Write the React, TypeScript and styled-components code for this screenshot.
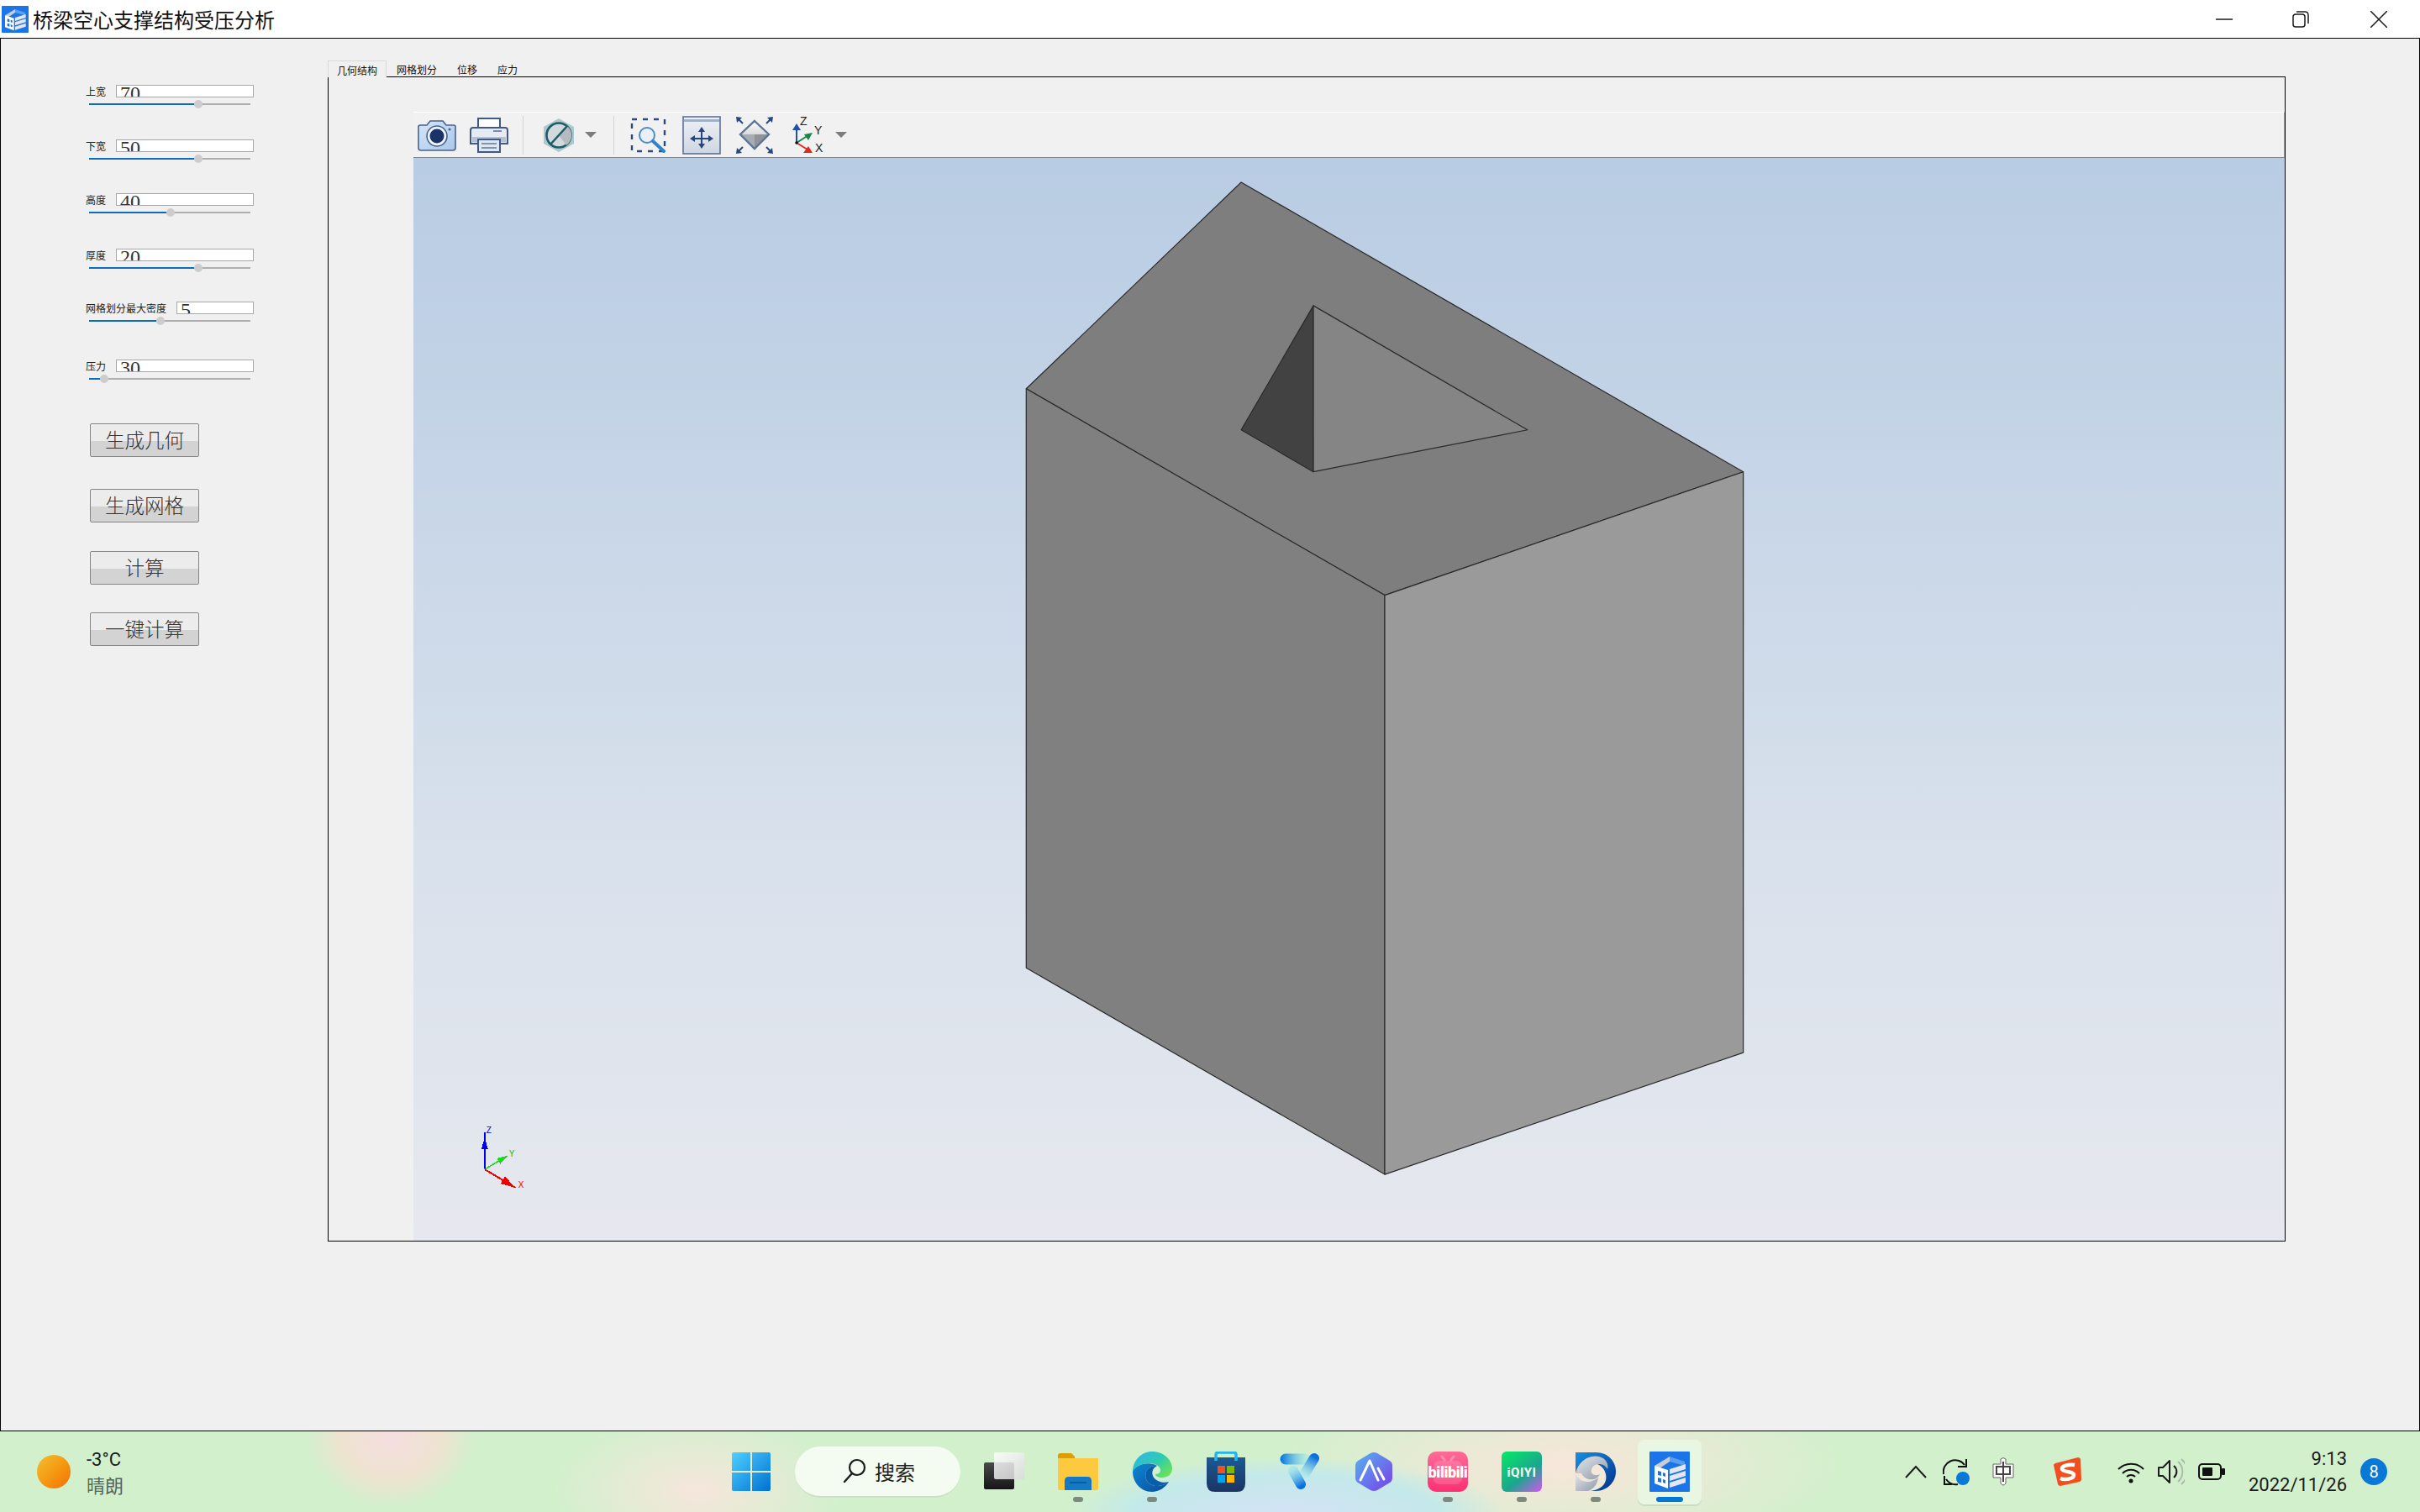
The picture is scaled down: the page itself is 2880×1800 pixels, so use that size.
import styled, { createGlobalStyle } from "styled-components";

const GlobalStyle = createGlobalStyle`
  html, body {
    margin: 0;
    padding: 0;
    width: 2880px;
    height: 1800px;
    overflow: hidden;
    background: #f0f0f0;
    font-family: "Noto Sans CJK SC", "Liberation Sans", sans-serif;
  }
  * { box-sizing: border-box; }
`;

const Page = styled.div`
  width: 2880px;
  height: 1800px;
  display: flex;
  flex-direction: column;
`;

const TitleBar = styled.header`
  height: 45px;
  background: #fff;
  display: flex;
  align-items: center;
  padding-left: 2px;
`;

const Title = styled.h1`
  margin: 0 0 0 5px;
  font-size: 24px;
  font-weight: 400;
  line-height: 45px;
  color: #111;
`;

const WindowControls = styled.div`
  margin-left: auto;
  display: flex;
`;

const WindowButton = styled.span<{ $mr: number }>`
  display: block;
  width: 20px;
  height: 20px;
  margin-right: ${({ $mr }) => $mr}px;
  svg { display: block; }
`;

const Main = styled.main`
  height: 1659px;
  border: 1px solid #000;
  background: #f0f0f0;
  display: flex;
`;

const SidePanel = styled.aside`
  width: 389px;
  padding-top: 55px;
  display: flex;
  flex-direction: column;
`;

const ParamRow = styled.div<{ $top: number }>`
  margin-top: ${({ $top }) => $top}px;
  margin-left: 101px;
  width: 200px;
`;

const ParamHead = styled.div`
  display: flex;
  align-items: center;
  height: 15px;
`;

const ParamLabel = styled.label`
  font-size: 12px;
  line-height: 15px;
  color: #222;
  margin-right: 12px;
  white-space: nowrap;
`;

/* the value text is taller than its box in the reference, so it is clipped */
const ValueBox = styled.div`
  flex: 1;
  height: 15px;
  background: #fff;
  border: 1px solid #a8a8a8;
  overflow: hidden;
  font-family: "Liberation Serif", serif;
  font-size: 24px;
  line-height: 18px;
  color: #333;
  padding-left: 4px;
`;

const SliderBox = styled.div`
  position: relative;
  width: 192px;
  height: 16px;
  margin-left: 4px;
  display: flex;
  align-items: center;
`;

const SliderTrack = styled.div`
  width: 100%;
  height: 2px;
  background: #aeaeae;
`;

const SliderFill = styled.div`
  height: 2px;
  background: #0f6cbd;
`;

const SliderKnob = styled.span`
  position: absolute;
  top: 3px;
  width: 10px;
  height: 10px;
  margin-left: -5px;
  border-radius: 50%;
  background: #cdcdcd;
`;

const ActionButton = styled.button<{ $top: number }>`
  display: block;
  width: 130px;
  height: 40px;
  margin: ${({ $top }) => $top}px 0 0 106px;
  padding: 1px 0 0;
  border: 1px solid #868686;
  border-radius: 2px;
  background: linear-gradient(#ececec 0, #ececec 52%, #d3d3d3 52%, #d3d3d3 100%);
  font-family: "Liberation Serif", "Noto Sans CJK SC", serif;
  font-size: 23.5px;
  font-weight: 300;
  line-height: 36px;
  color: #333;
`;

const TabWidget = styled.section`
  width: 2330px;
  padding-top: 26px;
  display: flex;
  flex-direction: column;
`;

const TabBar = styled.nav`
  display: flex;
  height: 20px;
  position: relative;
  z-index: 1;
`;

const Tab = styled.span<{ $active?: boolean }>`
  padding: 0 12px;
  height: 20px;
  font-size: 12px;
  line-height: 22px;
  color: #111;
  ${({ $active }) =>
    $active ? "background: #f0f0f0; border: 1px solid #d9d9d9; border-bottom: 0; padding: 0 10px;" : ""}
`;

const TabPane = styled.div`
  margin-top: -1px;
  height: 1387px;
  border: 1px solid #000;
  padding: 41px 0 0 101px;
  display: flex;
  flex-direction: column;
`;

const Toolbar = styled.div`
  height: 55px;
  border-top: 1px solid #fff;
  border-bottom: 1px solid #888;
  border-right: 1px solid #aaa;
  background: #f1f1f1;
  display: flex;
  align-items: center;
  padding-left: 5px;
`;

const ToolIcon = styled.span<{ $ml: number; $w?: number }>`
  display: block;
  margin-left: ${({ $ml }) => $ml}px;
  width: ${({ $w }) => $w ?? 46}px;
  svg { display: block; }
`;

const ToolSeparator = styled.span<{ $ml: number }>`
  width: 1px;
  height: 46px;
  margin-left: ${({ $ml }) => $ml}px;
  background: #d2d2d2;
`;

const ToolCaret = styled.span<{ $ml: number }>`
  margin-left: ${({ $ml }) => $ml}px;
  width: 0;
  height: 0;
  border-left: 7px solid transparent;
  border-right: 7px solid transparent;
  border-top: 7px solid #7d7d7d;
`;

const Viewport = styled.div`
  flex: 1;
  background: linear-gradient(#b8cce3 0%, #c9d7e8 35%, #d9e1ec 65%, #e6e8ee 100%);
  svg { display: block; }
`;

const Taskbar = styled.footer`
  height: 96px;
  display: flex;
  align-items: center;
  background:
    radial-gradient(ellipse 100px 85px at 465px 5px, #f5dde0 0%, #eee3d0 60%, rgba(225, 238, 200, 0) 100%),
    radial-gradient(ellipse 170px 90px at 830px 70px, #f6e6dc 0%, rgba(246, 230, 220, 0) 100%),
    radial-gradient(ellipse 260px 70px at 1530px 100px, #d4e2f6 0%, #c4e9ea 70%, rgba(196, 233, 234, 0) 100%),
    radial-gradient(ellipse 330px 110px at 1860px 40px, #f8e6da 0%, rgba(248, 230, 218, 0) 100%),
    #d3f0cd;
`;

const Weather = styled.div`
  width: 871px;
  padding-left: 44px;
  display: flex;
  align-items: center;
`;

const Sun = styled.span`
  width: 40px;
  height: 40px;
  border-radius: 50%;
  background: linear-gradient(135deg, #f3c030 0%, #f5960f 55%, #f06f08 100%);
`;

const WeatherText = styled.div`
  margin: 3px 0 0 19px;
  font-family: Roboto, "Noto Sans CJK SC", sans-serif;
  font-size: 22px;
  line-height: 32px;
  color: #1b1b1b;
`;

const WeatherSub = styled.div`
  color: #56655a;
`;

const StartIcon = styled.span`
  width: 46px;
  height: 46px;
  svg { display: block; }
`;

const SearchBox = styled.div`
  width: 197px;
  height: 61px;
  margin-left: 29px;
  border-radius: 31px;
  background: #f4fbf0;
  border-bottom: 2px solid #c9e2c3;
  display: flex;
  align-items: center;
  padding-left: 57px;
  font-size: 24px;
  color: #1f1f1f;
  svg { margin-right: 10px; }
`;

const TaskSlots = styled.div`
  margin-left: 8px;
  display: flex;
`;

const TaskSlot = styled.div<{ $active?: boolean }>`
  position: relative;
  width: 88px;
  height: 77px;
  display: flex;
  align-items: center;
  justify-content: center;
  svg { display: block; }
  ${({ $active }) =>
    $active
      ? "background: #e8f6e2; border-radius: 8px; width: 76px; margin-left: 6px; box-shadow: 0 2px 0 #c6dfc0;"
      : ""}
`;

const RunDot = styled.span<{ $active?: boolean }>`
  position: absolute;
  bottom: 3px;
  left: 50%;
  width: ${({ $active }) => ($active ? 32 : 12)}px;
  height: 6px;
  margin-left: ${({ $active }) => ($active ? -16 : -6)}px;
  border-radius: 3px;
  background: ${({ $active }) => ($active ? "#0078d4" : "#7d8a80")};
`;

const Tray = styled.div`
  margin-left: 242px;
  display: flex;
  align-items: center;
`;

const TrayIcon = styled.span<{ $ml: number; $w: number }>`
  display: block;
  margin-left: ${({ $ml }) => $ml}px;
  width: ${({ $w }) => $w}px;
  svg { display: block; }
`;

const Clock = styled.div`
  width: 145px;
  text-align: right;
  font-family: Roboto, "Liberation Sans", sans-serif;
  font-size: 22px;
  line-height: 31px;
  color: #1b1b1b;
`;

const Badge = styled.span`
  margin-left: 16px;
  width: 32px;
  height: 32px;
  border-radius: 50%;
  background: #0a78d7;
  color: #fff;
  font-family: Roboto, sans-serif;
  font-size: 20px;
  line-height: 32px;
  text-align: center;
`;

const AppIcon = ({ size }: { size: number }) => (
  <svg width={size} height={size} viewBox="0 0 48 48">
    <rect width="48" height="48" rx="1" fill="#1b74e8" />
    <path d="M6 17 L24 6 L24 12 L12 20 Z" fill="#c9ced6" />
    <path d="M24 6 L42 12 L42 17 L24 12 Z" fill="#5aa0f0" />
    <path d="M6 17 L22 22 L22 44 L6 38 Z" fill="#fff" />
    <path d="M10 23 L14 24 L14 29 L10 28 Z M16 25 L19 26 L19 30 L16 29 Z M10 31 L14 32 L14 37 L10 36 Z M16 33 L19 34 L19 38 L16 37 Z" fill="#1b74e8" />
    <path d="M24 21 L43 15 L43 21 L24 27 Z M24 29 L43 23 L43 29 L24 35 Z M24 37 L43 31 L43 37 L24 43 Z" fill="#e4e8ee" />
  </svg>
);

const CameraIcon = () => (
  <svg width="46" height="40" viewBox="0 0 46 40">
    <defs>
      <linearGradient id="camBody" x1="0" y1="0" x2="1" y2="1">
        <stop offset="0" stopColor="#d6e6f7" />
        <stop offset="1" stopColor="#a9c8ea" />
      </linearGradient>
    </defs>
    <path d="M3 8 H11 L15 3 H30 L34 8 H43 Q45 8 45 10 V35 Q45 38 42 38 H4 Q1 38 1 35 V10 Q1 8 3 8 Z" fill="url(#camBody)" stroke="#47628f" strokeWidth="1.6" />
    <circle cx="23" cy="21" r="12" fill="#edf3fa" stroke="#47628f" strokeWidth="1.6" />
    <circle cx="23" cy="21" r="8.5" fill="#1c3366" />
    <circle cx="38" cy="13" r="1.5" fill="#47628f" />
  </svg>
);

const PrinterIcon = () => (
  <svg width="46" height="44" viewBox="0 0 46 44">
    <rect x="10" y="2" width="26" height="14" fill="#fff" stroke="#3f5a88" strokeWidth="2" />
    <path d="M4 13 H42 Q45 13 45 16 V32 H1 V16 Q1 13 4 13 Z" fill="#e6ebf3" stroke="#3f5a88" strokeWidth="2" />
    <rect x="3" y="24" width="40" height="6" fill="#b4c2d6" />
    <rect x="28" y="16" width="10" height="2" fill="#7d8ca6" />
    <rect x="10" y="27" width="26" height="15" fill="#dfe6ef" stroke="#3f5a88" strokeWidth="2" />
    <path d="M14 32 H32 M14 37 H32" stroke="#7f93b3" strokeWidth="2" />
  </svg>
);

const HexIcon = () => (
  <svg width="38" height="42" viewBox="0 0 38 42">
    <path d="M19 1 L37 11 V31 L19 41 L1 31 V11 Z" fill="#afc8cd" />
    <circle cx="19" cy="21" r="14.5" fill="#d3dadd" stroke="#1d5c68" strokeWidth="2.6" />
    <path d="M19 21 L29 10 A14.5 14.5 0 0 1 28 33 Z" fill="#b4bcc1" />
    <path d="M9 32 L29 10" stroke="#1d5c68" strokeWidth="2.6" />
  </svg>
);

const ZoomBoxIcon = () => (
  <svg width="44" height="42" viewBox="0 0 44 42">
    <rect x="2" y="2" width="39" height="38" fill="none" stroke="#2c4a80" strokeWidth="2.4" strokeDasharray="6 7" />
    <circle cx="20" cy="21" r="9" fill="#e9f0f9" stroke="#4a8cc4" strokeWidth="2" />
    <path d="M27 28 L40 40" stroke="#2f83c9" strokeWidth="4" strokeLinecap="round" />
  </svg>
);

const PanIcon = () => (
  <svg width="46" height="46" viewBox="0 0 46 46">
    <defs>
      <linearGradient id="panBg" x1="0" y1="0" x2="0" y2="1">
        <stop offset="0" stopColor="#eef1f6" />
        <stop offset="1" stopColor="#cfd6e2" />
      </linearGradient>
    </defs>
    <rect x="1" y="1" width="44" height="44" fill="url(#panBg)" stroke="#5b7099" strokeWidth="1.6" />
    <rect x="2" y="4" width="42" height="3" fill="#9fb0c8" />
    <path d="M23 17 V37 M12 27 H34" stroke="#27467c" strokeWidth="2" />
    <path d="M23 13 L19 19 H27 Z M23 39 L19 33 H27 Z M9 27 L15 23 V31 Z M37 27 L31 23 V31 Z" fill="#27467c" />
  </svg>
);

const FitIcon = () => (
  <svg width="46" height="46" viewBox="0 0 46 46">
    <defs>
      <linearGradient id="fitTop" x1="0" y1="0" x2="0" y2="1">
        <stop offset="0" stopColor="#fdfdfd" />
        <stop offset="1" stopColor="#d8dade" />
      </linearGradient>
    </defs>
    <path d="M23 6 L40 22 H6 Z" fill="url(#fitTop)" />
    <path d="M6 22 H23 V39 Z" fill="#a8adb4" />
    <path d="M23 22 H40 L23 39 Z" fill="#8e9399" />
    <path d="M23 6 L40 22 L23 39 L6 22 Z" fill="none" stroke="#5d7494" strokeWidth="2.4" />
    <path d="M1 1 L8 2 L2 8 Z M45 1 L38 2 L44 8 Z M1 45 L8 44 L2 38 Z M45 45 L38 44 L44 38 Z" fill="#26497f" />
    <path d="M3 3 L9 9 M43 3 L37 9 M3 43 L9 37 M43 43 L37 37" stroke="#26497f" strokeWidth="2" />
  </svg>
);

const AxesIcon = () => (
  <svg width="46" height="46" viewBox="0 0 46 46">
    <path d="M6 32 V14" stroke="#1f4fb3" strokeWidth="2" />
    <path d="M6 9 L1 17 H11 Z" fill="#1f4fb3" />
    <path d="M6 32 L20 23" stroke="#15884a" strokeWidth="2" />
    <path d="M25 20 L15 22 L20 29 Z" fill="#15884a" />
    <path d="M6 32 L19 40" stroke="#e3261f" strokeWidth="2" />
    <path d="M25 44 L14 44 L20 36 Z" fill="#e3261f" />
    <circle cx="6" cy="32" r="1.8" fill="#111" />
    <text x="10" y="11" fontFamily="Liberation Sans, sans-serif" fontSize="14" fill="#222">Z</text>
    <text x="27" y="22" fontFamily="Liberation Sans, sans-serif" fontSize="14" fill="#222">Y</text>
    <text x="28" y="43" fontFamily="Liberation Sans, sans-serif" fontSize="14" fill="#222">X</text>
  </svg>
);

const WinLogo = () => (
  <svg width="46" height="46" viewBox="0 0 46 46">
    <defs>
      <linearGradient id="winGrad" x1="0" y1="0" x2="1" y2="1">
        <stop offset="0" stopColor="#4fd0ff" />
        <stop offset="1" stopColor="#0070d2" />
      </linearGradient>
    </defs>
    <path d="M0 2 Q0 0 2 0 H22 V22 H0 Z M24 0 H44 Q46 0 46 2 V22 H24 Z M0 24 H22 V46 H2 Q0 46 0 44 Z M24 24 H46 V44 Q46 46 44 46 H24 Z" fill="url(#winGrad)" />
  </svg>
);

const TaskViewIcon = () => (
  <svg width="48" height="46" viewBox="0 0 48 46">
    <defs>
      <linearGradient id="tvDark" x1="0" y1="0" x2="0" y2="1">
        <stop offset="0" stopColor="#4a4a4a" />
        <stop offset="1" stopColor="#151515" />
      </linearGradient>
      <linearGradient id="tvLight" x1="0" y1="0" x2="1" y2="1">
        <stop offset="0" stopColor="#fff" />
        <stop offset="1" stopColor="#dadada" />
      </linearGradient>
    </defs>
    <rect x="0" y="12" width="36" height="32" rx="2" fill="url(#tvDark)" />
    <rect x="12" y="0" width="36" height="32" rx="2" fill="url(#tvLight)" opacity="0.85" />
  </svg>
);

const FolderIcon = () => (
  <svg width="48" height="44" viewBox="0 0 48 44">
    <path d="M0 3 Q0 0 3 0 H16 L20 4 V8 H0 Z" fill="#dc9e00" />
    <path d="M0 6 H47 Q48 6 48 7 V42 Q48 44 46 44 H2 Q0 44 0 42 Z" fill="#fdc93f" />
    <path d="M8 44 V33 Q8 28 13 28 H35 Q40 28 40 33 V44 Z" fill="#1479c5" />
    <path d="M14 35 H34" stroke="#0d5a9c" strokeWidth="2" />
  </svg>
);

const EdgeIcon = () => (
  <svg width="48" height="48" viewBox="0 0 48 48">
    <defs>
      <linearGradient id="edgeTop" x1="0" y1="0" x2="1" y2="0.7">
        <stop offset="0" stopColor="#30b6ee" />
        <stop offset="0.6" stopColor="#2ecbb0" />
        <stop offset="1" stopColor="#6ae05c" />
      </linearGradient>
      <linearGradient id="edgeLow" x1="0" y1="0" x2="1" y2="1">
        <stop offset="0" stopColor="#0d86d4" />
        <stop offset="1" stopColor="#0b4c9c" />
      </linearGradient>
    </defs>
    <path d="M1 24 C1 10 12 0 24 0 C38 0 48 10 48 20 C48 27 43 31 36 31 C31 31 28 29 28 27 C34 27 36 22 32 18 C26 12 8 12 1 24 Z" fill="url(#edgeTop)" />
    <path d="M1 24 C6 14 22 12 30 17 C20 16 14 24 17 33 C20 42 34 44 44 36 C40 43 32 48 24 48 C10 48 1 36 1 24 Z" fill="url(#edgeLow)" />
    <path d="M17 33 C14 24 20 16 30 17 C24 20 23 26 26 31 C30 36 38 38 44 36 C34 44 20 42 17 33 Z" fill="#0a5ea8" />
  </svg>
);

const StoreIcon = () => (
  <svg width="46" height="48" viewBox="0 0 46 48">
    <defs>
      <linearGradient id="storeBag" x1="0" y1="0" x2="0" y2="1">
        <stop offset="0" stopColor="#1b5a94" />
        <stop offset="1" stopColor="#1c3363" />
      </linearGradient>
    </defs>
    <path d="M0 7 H46 V38 Q46 48 36 48 H10 Q0 48 0 38 Z" fill="url(#storeBag)" />
    <path d="M11 11 V4 Q11 1 14 1 H32 Q35 1 35 4 V11" fill="none" stroke="#23b4f2" strokeWidth="3.5" />
    <rect x="13" y="17" width="9" height="9" fill="#f25022" />
    <rect x="24" y="17" width="9" height="9" fill="#7fba00" />
    <rect x="13" y="28" width="9" height="9" fill="#00a4ef" />
    <rect x="24" y="28" width="9" height="9" fill="#ffb900" />
  </svg>
);

const VIcon = () => (
  <svg width="48" height="46" viewBox="0 0 48 46">
    <defs>
      <linearGradient id="vA" gradientUnits="userSpaceOnUse" x1="2" y1="8" x2="32" y2="8">
        <stop offset="0" stopColor="#0a7ae0" />
        <stop offset="1" stopColor="#8ce6ee" stopOpacity="0.4" />
      </linearGradient>
      <linearGradient id="vB" gradientUnits="userSpaceOnUse" x1="42" y1="6" x2="29" y2="28">
        <stop offset="0" stopColor="#0a6fe0" />
        <stop offset="1" stopColor="#9cecf0" stopOpacity="0.4" />
      </linearGradient>
      <linearGradient id="vC" gradientUnits="userSpaceOnUse" x1="15" y1="20" x2="26" y2="40">
        <stop offset="0" stopColor="#7ee2ee" stopOpacity="0.4" />
        <stop offset="1" stopColor="#0a6fe0" />
      </linearGradient>
    </defs>
    <path d="M7 8 H30" stroke="url(#vA)" strokeWidth="13" strokeLinecap="round" fill="none" />
    <path d="M41 7 L30 25" stroke="url(#vB)" strokeWidth="12" strokeLinecap="round" fill="none" />
    <path d="M16 22 L25 38" stroke="url(#vC)" strokeWidth="12" strokeLinecap="round" fill="none" />
  </svg>
);

const ArcIcon = () => (
  <svg width="44" height="48" viewBox="0 0 44 48">
    <defs>
      <linearGradient id="arcBg" x1="0" y1="0" x2="1" y2="1">
        <stop offset="0" stopColor="#55b4f0" />
        <stop offset="1" stopColor="#7a3ee8" />
      </linearGradient>
    </defs>
    <path d="M18 2 Q22 0 26 2 L41 11 Q44 13 44 17 V31 Q44 35 41 37 L26 46 Q22 48 18 46 L3 37 Q0 35 0 31 V17 Q0 13 3 11 Z" fill="url(#arcBg)" />
    <path d="M6 34 L17 11 L27 34 M27 20 L34 33" fill="none" stroke="#fff" strokeWidth="3" strokeLinecap="round" strokeLinejoin="round" />
  </svg>
);

const BiliIcon = () => (
  <svg width="48" height="48" viewBox="0 0 48 48">
    <defs>
      <linearGradient id="biliBg" x1="0" y1="0" x2="0" y2="1">
        <stop offset="0" stopColor="#fc6c97" />
        <stop offset="1" stopColor="#fd2f73" />
      </linearGradient>
    </defs>
    <rect width="48" height="48" rx="10" fill="url(#biliBg)" />
    <rect x="7" y="11" width="34" height="28" rx="7" fill="#fff" opacity="0.15" />
    <path d="M16 5 L21 11 M32 5 L27 11" stroke="#fff" strokeOpacity="0.25" strokeWidth="3" />
    <text x="24" y="31" textAnchor="middle" fontFamily="Roboto, sans-serif" fontWeight="900" fontSize="18" letterSpacing="-0.4" fill="#fff">bilibili</text>
  </svg>
);

const IqiyiIcon = () => (
  <svg width="48" height="48" viewBox="0 0 48 48">
    <defs>
      <linearGradient id="iqBg" x1="0.2" y1="0" x2="1" y2="1">
        <stop offset="0" stopColor="#07e06b" />
        <stop offset="0.55" stopColor="#1ca58e" />
        <stop offset="1" stopColor="#d655f5" />
      </linearGradient>
    </defs>
    <rect width="48" height="48" rx="6" fill="url(#iqBg)" />
    <text x="24" y="30" textAnchor="middle" fontFamily="Roboto, sans-serif" fontWeight="700" fontSize="15" letterSpacing="0.6" fill="#fff">iQIYI</text>
  </svg>
);

const SwirlIcon = () => (
  <svg width="48" height="48" viewBox="0 0 48 48">
    <defs>
      <linearGradient id="swA" x1="0" y1="0" x2="1" y2="1">
        <stop offset="0" stopColor="#e4e7ec" />
        <stop offset="1" stopColor="#8f97a8" />
      </linearGradient>
      <linearGradient id="swB" x1="0" y1="0" x2="1" y2="1">
        <stop offset="0" stopColor="#1b8fe0" />
        <stop offset="1" stopColor="#002f8c" />
      </linearGradient>
    </defs>
    <path d="M0 1 H24 C40 1 48 13 48 24 C48 36 38 47 24 47 H18 C33 45 38 36 36 27 C34 17 24 12 14 14 C8 16 3 20 0 26 Z" fill="url(#swB)" />
    <path d="M0 26 C3 12 16 3 28 6 C36 8 40 15 38 21 C34 13 22 13 19 21 C17 27 24 30 29 27 C24 37 10 34 7 26 Z" fill="url(#swA)" />
    <path d="M0 26 C4 36 16 40 27 31 C26 40 20 46 14 47 H0 Z" fill="url(#swA)" />
  </svg>
);

const TrayChevron = () => (
  <svg width="26" height="16" viewBox="0 0 26 16">
    <path d="M1 15 L13 2 L25 15" fill="none" stroke="#1b1b1b" strokeWidth="2" />
  </svg>
);

const TraySync = () => (
  <svg width="32" height="34" viewBox="0 0 32 34">
    <path d="M1 20 A14 14 0 0 1 26 9" fill="none" stroke="#111" strokeWidth="2" />
    <path d="M28 2 V11 H18" fill="none" stroke="#111" strokeWidth="2" />
    <path d="M18 32 A14 14 0 0 1 4 26" fill="none" stroke="#111" strokeWidth="2" />
    <path d="M2 22 V32 H11" fill="none" stroke="#111" strokeWidth="2" />
    <circle cx="24" cy="25" r="8" fill="#0a78d7" />
  </svg>
);

const TrayIme = () => (
  <svg width="26" height="34" viewBox="0 0 26 34">
    <path d="M10 2 Q13 -1 16 2 V8 H25 V24 H16 V31 Q13 35 10 31 V24 H1 V8 H10 Z" fill="#fff" stroke="#666" strokeWidth="1" />
    <path d="M5 11 H21 V20 H5 Z M13 5 V29" fill="none" stroke="#444" strokeWidth="2" />
  </svg>
);

const TraySogou = () => (
  <svg width="33" height="34" viewBox="0 0 33 34">
    <path d="M2 7 L29 0 Q31 0 32 2 L33 26 Q33 28 31 29 L8 34 Q6 34 5 32 L0 9 Q0 8 2 7 Z" fill="#f0501e" />
    <path d="M25 9 C18 8 9 10 10 14 C11 18 24 16 24 21 C24 26 13 27 8 25" fill="none" stroke="#fff" strokeWidth="4.5" />
  </svg>
);

const TrayWifi = () => (
  <svg width="32" height="28" viewBox="0 0 32 28">
    <path d="M1 11 A21 21 0 0 1 31 11 M6 16 A14 14 0 0 1 26 16 M11 20 A7 7 0 0 1 21 20" fill="none" stroke="#111" strokeWidth="2" />
    <circle cx="16" cy="25" r="2.5" fill="#111" />
  </svg>
);

const TraySpeaker = () => (
  <svg width="32" height="34" viewBox="0 0 32 34">
    <path d="M1 12 H6 L14 4 V30 L6 22 H1 Z" fill="none" stroke="#1b1b1b" strokeWidth="2" strokeLinejoin="round" />
    <path d="M19 10 A9 9 0 0 1 19 24" fill="none" stroke="#1b1b1b" strokeWidth="2" />
    <path d="M24 5 A16 16 0 0 1 24 29 M28 2 A20 20 0 0 1 28 32" fill="none" stroke="#a9bda7" strokeWidth="2" />
  </svg>
);

const TrayBattery = () => (
  <svg width="32" height="20" viewBox="0 0 32 20">
    <rect x="1" y="1" width="26" height="18" rx="4" fill="none" stroke="#111" strokeWidth="2" />
    <rect x="5" y="5" width="12" height="10" rx="1" fill="#111" />
    <rect x="28" y="6" width="4" height="8" rx="1" fill="#111" />
  </svg>
);

const params = [
  { label: "上宽", value: "70", pct: 67.7, top: 0 },
  { label: "下宽", value: "50", pct: 67.7, top: 34 },
  { label: "高度", value: "40", pct: 50.5, top: 33 },
  { label: "厚度", value: "20", pct: 67.7, top: 35 },
  { label: "网格划分最大密度", value: "5", pct: 44.3, top: 32 },
  { label: "压力", value: "30", pct: 9.4, top: 38 },
];

const actions = [
  { label: "生成几何", top: 45 },
  { label: "生成网格", top: 38 },
  { label: "计算", top: 34 },
  { label: "一键计算", top: 33 },
];

const tabs = ["几何结构", "网格划分", "位移", "应力"];

export default function App() {
  return (
    <Page>
      <GlobalStyle />
      <TitleBar>
        <AppIcon size={32} />
        <Title>桥梁空心支撑结构受压分析</Title>
        <WindowControls>
          <WindowButton $mr={71}>
            <svg width="20" height="20" viewBox="0 0 20 20">
              <path d="M0 10 H20" stroke="#1a1a1a" strokeWidth="1.5" />
            </svg>
          </WindowButton>
          <WindowButton $mr={73}>
            <svg width="20" height="20" viewBox="0 0 20 20">
              <rect x="1" y="4" width="14" height="15" rx="3" fill="none" stroke="#1a1a1a" strokeWidth="1.5" />
              <path d="M5 1 H15 Q19 1 19 5 V15" fill="none" stroke="#1a1a1a" strokeWidth="1.5" />
            </svg>
          </WindowButton>
          <WindowButton $mr={39}>
            <svg width="20" height="20" viewBox="0 0 20 20">
              <path d="M0 0 L20 20 M20 0 L0 20" stroke="#1a1a1a" strokeWidth="1.5" />
            </svg>
          </WindowButton>
        </WindowControls>
      </TitleBar>

      <Main>
        <SidePanel>
          {params.map((p) => (
            <ParamRow key={p.label} $top={p.top}>
              <ParamHead>
                <ParamLabel>{p.label}</ParamLabel>
                <ValueBox>{p.value}</ValueBox>
              </ParamHead>
              <SliderBox>
                <SliderTrack>
                  <SliderFill style={{ width: `${p.pct}%` }} />
                </SliderTrack>
                <SliderKnob style={{ left: `${p.pct}%` }} />
              </SliderBox>
            </ParamRow>
          ))}
          {actions.map((a) => (
            <ActionButton key={a.label} $top={a.top}>
              {a.label}
            </ActionButton>
          ))}
        </SidePanel>

        <TabWidget>
          <TabBar>
            {tabs.map((t, i) => (
              <Tab key={t} $active={i === 0}>
                {t}
              </Tab>
            ))}
          </TabBar>
          <TabPane>
            <Toolbar>
              <ToolIcon $ml={0}><CameraIcon /></ToolIcon>
              <ToolIcon $ml={16}><PrinterIcon /></ToolIcon>
              <ToolSeparator $ml={17} />
              <ToolIcon $ml={23} $w={38}><HexIcon /></ToolIcon>
              <ToolCaret $ml={12} />
              <ToolSeparator $ml={20} />
              <ToolIcon $ml={19} $w={44}><ZoomBoxIcon /></ToolIcon>
              <ToolIcon $ml={18}><PanIcon /></ToolIcon>
              <ToolIcon $ml={17}><FitIcon /></ToolIcon>
              <ToolIcon $ml={21}><AxesIcon /></ToolIcon>
              <ToolCaret $ml={6} />
            </Toolbar>
            <Viewport>
              <svg width="2226" height="1288" viewBox="0 0 2226 1289">
                <g stroke="#2a2a2a" strokeWidth="1.2" strokeLinejoin="round">
                  <polygon points="985,29 1583,374 1156,521 729,275" fill="#7e7e7e" />
                  <polygon points="729,275 1156,521 1156,1211 729,965" fill="#808080" />
                  <polygon points="1156,521 1583,374 1583,1066 1156,1211" fill="#9a9a9a" />
                  <polygon points="1071,176 1071,374 985,324" fill="#424242" />
                  <polygon points="1071,176 1326,324 1071,374" fill="#858585" />
                </g>
                <g shapeRendering="crispEdges">
                  <path d="M84 1205 V1161" stroke="#0000f0" strokeWidth="2.5" />
                  <polygon points="84,1167 80,1181 88,1181" fill="#0000f0" />
                  <path d="M84 1205 L111 1189" stroke="#10e010" strokeWidth="1.6" />
                  <polygon points="111,1189 102.7,1198.5 98.7,1191.7" fill="#10e010" />
                  <path d="M84 1205 L121 1227" stroke="#f00000" strokeWidth="2" />
                  <polygon points="121,1227 108,1213.5 103,1222" fill="#f00000" />
                </g>
                <text x="86" y="1162" fontFamily="Liberation Sans, sans-serif" fontSize="10" fill="#0000f0">Z</text>
                <text x="113" y="1190" fontFamily="Liberation Sans, sans-serif" fontSize="10" fill="#10c010">Y</text>
                <text x="124" y="1227" fontFamily="Liberation Sans, sans-serif" fontSize="10" fill="#f00000">X</text>
              </svg>
            </Viewport>
          </TabPane>
        </TabWidget>
      </Main>

      <Taskbar>
        <Weather>
          <Sun />
          <WeatherText>
            <div>-3°C</div>
            <WeatherSub>晴朗</WeatherSub>
          </WeatherText>
        </Weather>
        <StartIcon><WinLogo /></StartIcon>
        <SearchBox>
          <svg width="28" height="30" viewBox="0 0 28 30">
            <circle cx="17" cy="11" r="9" fill="none" stroke="#1b1b1b" strokeWidth="2.2" />
            <path d="M11 18 L2 28" stroke="#1b1b1b" strokeWidth="2.4" strokeLinecap="round" />
          </svg>
          搜索
        </SearchBox>
        <TaskSlots>
          <TaskSlot><TaskViewIcon /></TaskSlot>
          <TaskSlot><FolderIcon /><RunDot /></TaskSlot>
          <TaskSlot><EdgeIcon /><RunDot /></TaskSlot>
          <TaskSlot><StoreIcon /></TaskSlot>
          <TaskSlot><VIcon /></TaskSlot>
          <TaskSlot><ArcIcon /></TaskSlot>
          <TaskSlot><BiliIcon /><RunDot /></TaskSlot>
          <TaskSlot><IqiyiIcon /><RunDot /></TaskSlot>
          <TaskSlot><SwirlIcon /><RunDot /></TaskSlot>
          <TaskSlot $active><AppIcon size={48} /><RunDot $active /></TaskSlot>
        </TaskSlots>
        <Tray>
          <TrayIcon $ml={0} $w={26}><TrayChevron /></TrayIcon>
          <TrayIcon $ml={19} $w={32}><TraySync /></TrayIcon>
          <TrayIcon $ml={27} $w={26}><TrayIme /></TrayIcon>
          <TrayIcon $ml={47} $w={33}><TraySogou /></TrayIcon>
          <TrayIcon $ml={43} $w={32}><TrayWifi /></TrayIcon>
          <TrayIcon $ml={16} $w={32}><TraySpeaker /></TrayIcon>
          <TrayIcon $ml={16} $w={32}><TrayBattery /></TrayIcon>
          <Clock>
            <div>9:13</div>
            <div>2022/11/26</div>
          </Clock>
          <Badge>8</Badge>
        </Tray>
      </Taskbar>
    </Page>
  );
}
